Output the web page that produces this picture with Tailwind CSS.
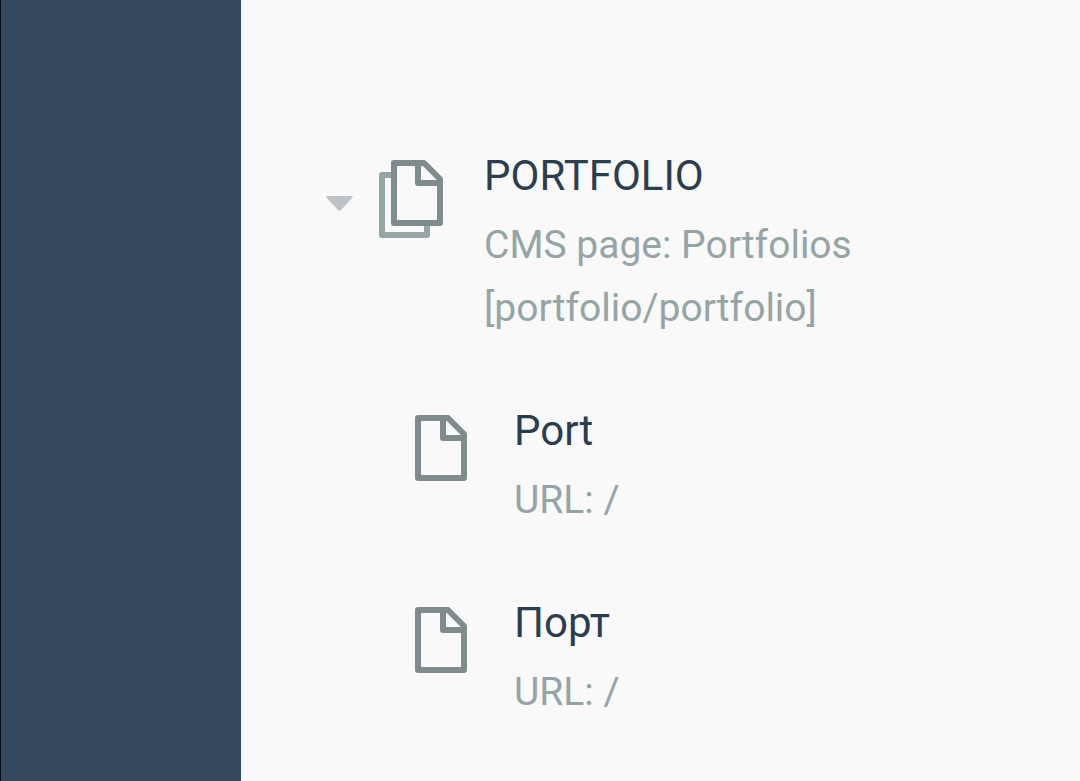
<!DOCTYPE html>
<html lang="en">
<head>
    <meta charset="UTF-8">
    <meta name="viewport" content="width=device-width, initial-scale=1.0">
    <title>Menu items</title>
    <script src="https://cdn.jsdelivr.net/npm/@tailwindcss/browser@4"></script>
</head>
<body class="flex min-h-screen bg-[#f9f9f9] font-['Roboto',sans-serif]">
    <aside class="w-[241px] shrink-0 border-l border-[#0b1219] bg-[#34495e]"></aside>

    <main class="flex-1 pt-[144px] pl-[85px]">
        <ul>
            <li>
                <div class="flex">
                    <button type="button" aria-label="Collapse PORTFOLIO" class="mt-[52px] h-[15px] w-[27px] shrink-0">
                        <svg class="h-[15px] w-[27px]" viewBox="0 0 27 15" fill="#bdc3c7">
                            <path d="M1.500 0h24c1.300 0 1.500 1 .8 1.800L15 14c-.9.900-2.100.900-3 0L.7 1.800C0 1 .2 0 1.500 0z"/>
                        </svg>
                    </button>
                    <!-- stacked pages -->
                    <svg class="mt-4 ml-[26px] h-[78px] w-[64px] shrink-0" viewBox="0 0 64 78" fill="none" stroke-width="6" stroke-linejoin="round">
                        <path stroke="#95a5a6" d="M12 15H3v60h45v-9"/>
                        <path stroke="#7f8c8d" d="M15 3h30l16 16v44H15z"/>
                        <path stroke="#7f8c8d" d="M39 3v20h22"/>
                    </svg>
                    <div class="ml-[41px]">
                        <h2 class="text-[42px] leading-[64px] text-[#2b3e50]">PORTFOLIO</h2>
                        <p class="mt-1.5 text-[39px] leading-[63px] text-[#95a5a6]">CMS page: Portfolios<br>[portfolio/portfolio]</p>
                    </div>
                </div>
                <ul class="ml-[89px]">
                    <li class="mt-[59px] flex">
                        <svg class="mt-4 h-[66px] w-[52px] shrink-0" viewBox="0 0 52 66" fill="none" stroke="#7f8c8d" stroke-width="6" stroke-linejoin="round">
                            <path d="M3 3h30l16 16v44H3z"/>
                            <path d="M28 3v20h21"/>
                        </svg>
                        <div class="ml-[47px]">
                            <h3 class="text-[42px] leading-[64px] text-[#2b3e50]">Port</h3>
                            <p class="mt-1.5 text-[39px] leading-[63px] text-[#95a5a6]">URL: /</p>
                        </div>
                    </li>
                    <li class="mt-[59px] flex">
                        <svg class="mt-4 h-[66px] w-[52px] shrink-0" viewBox="0 0 52 66" fill="none" stroke="#7f8c8d" stroke-width="6" stroke-linejoin="round">
                            <path d="M3 3h30l16 16v44H3z"/>
                            <path d="M28 3v20h21"/>
                        </svg>
                        <div class="ml-[47px]">
                            <h3 class="text-[42px] leading-[64px] text-[#2b3e50]">Порт</h3>
                            <p class="mt-1.5 text-[39px] leading-[63px] text-[#95a5a6]">URL: /</p>
                        </div>
                    </li>
                </ul>
            </li>
        </ul>
    </main>
</body>
</html>
